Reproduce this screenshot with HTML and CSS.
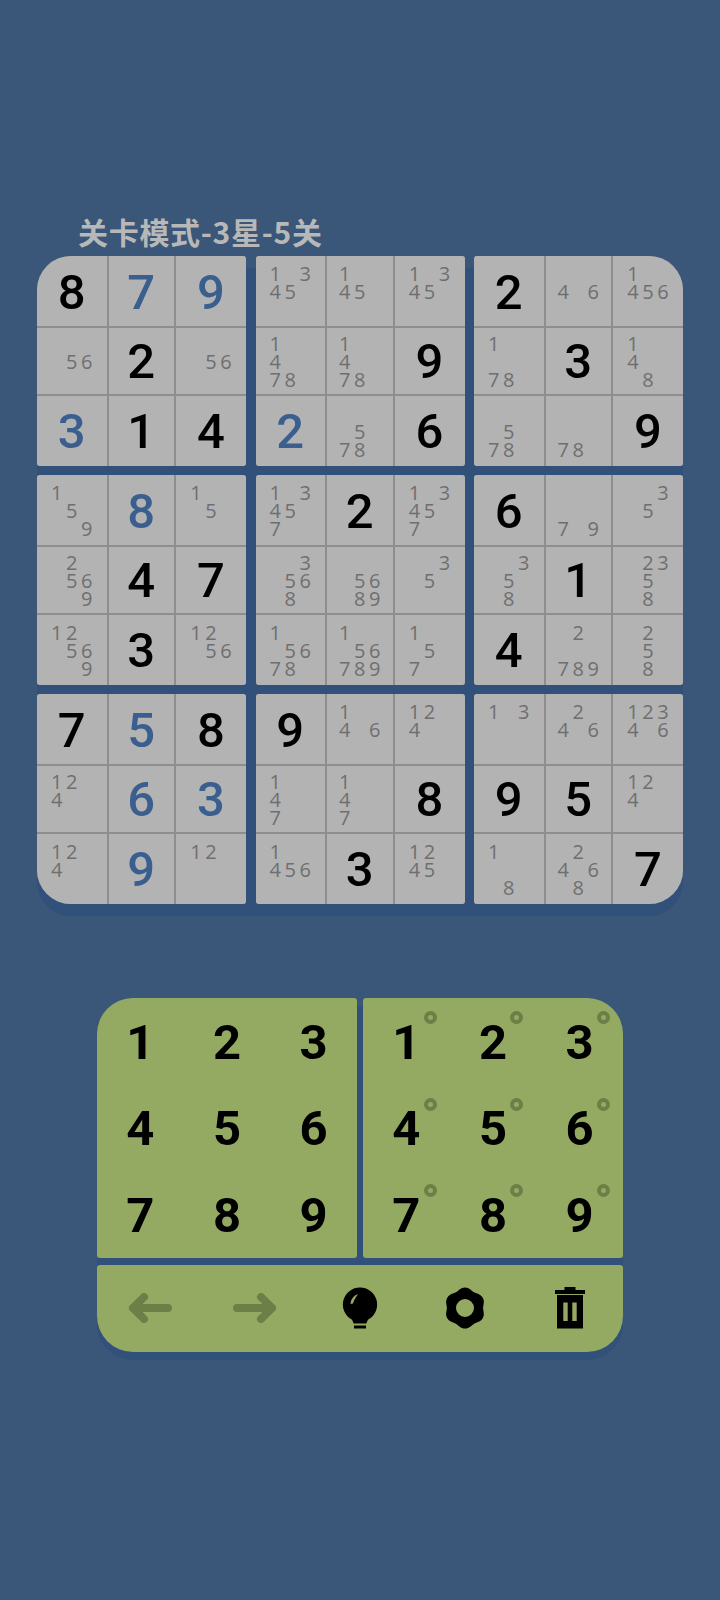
FILE: index.html
```html
<!DOCTYPE html>
<html lang="zh">
<head>
<meta charset="utf-8">
<title>数独</title>
<link rel="stylesheet" href="styles.css">
</head>
<body>
<main class="page">
<h1 class="title">关卡模式-3星-5关</h1>
<section class="board">
<div class="box tl">
<div class="cell">8</div><div class="cell given">7</div><div class="cell given">9</div>
<div class="cell"><div class="notes"><b class="n5">5</b><b class="n6">6</b></div></div><div class="cell">2</div><div class="cell"><div class="notes"><b class="n5">5</b><b class="n6">6</b></div></div>
<div class="cell given">3</div><div class="cell">1</div><div class="cell">4</div>
</div>
<div class="box">
<div class="cell"><div class="notes"><b class="n1">1</b><b class="n3">3</b><b class="n4">4</b><b class="n5">5</b></div></div><div class="cell"><div class="notes"><b class="n1">1</b><b class="n4">4</b><b class="n5">5</b></div></div><div class="cell"><div class="notes"><b class="n1">1</b><b class="n3">3</b><b class="n4">4</b><b class="n5">5</b></div></div>
<div class="cell"><div class="notes"><b class="n1">1</b><b class="n4">4</b><b class="n7">7</b><b class="n8">8</b></div></div><div class="cell"><div class="notes"><b class="n1">1</b><b class="n4">4</b><b class="n7">7</b><b class="n8">8</b></div></div><div class="cell">9</div>
<div class="cell given">2</div><div class="cell"><div class="notes"><b class="n5">5</b><b class="n7">7</b><b class="n8">8</b></div></div><div class="cell">6</div>
</div>
<div class="box tr">
<div class="cell">2</div><div class="cell"><div class="notes"><b class="n4">4</b><b class="n6">6</b></div></div><div class="cell"><div class="notes"><b class="n1">1</b><b class="n4">4</b><b class="n5">5</b><b class="n6">6</b></div></div>
<div class="cell"><div class="notes"><b class="n1">1</b><b class="n7">7</b><b class="n8">8</b></div></div><div class="cell">3</div><div class="cell"><div class="notes"><b class="n1">1</b><b class="n4">4</b><b class="n8">8</b></div></div>
<div class="cell"><div class="notes"><b class="n5">5</b><b class="n7">7</b><b class="n8">8</b></div></div><div class="cell"><div class="notes"><b class="n7">7</b><b class="n8">8</b></div></div><div class="cell">9</div>
</div>
<div class="box">
<div class="cell"><div class="notes"><b class="n1">1</b><b class="n5">5</b><b class="n9">9</b></div></div><div class="cell given">8</div><div class="cell"><div class="notes"><b class="n1">1</b><b class="n5">5</b></div></div>
<div class="cell"><div class="notes"><b class="n2">2</b><b class="n5">5</b><b class="n6">6</b><b class="n9">9</b></div></div><div class="cell">4</div><div class="cell">7</div>
<div class="cell"><div class="notes"><b class="n1">1</b><b class="n2">2</b><b class="n5">5</b><b class="n6">6</b><b class="n9">9</b></div></div><div class="cell">3</div><div class="cell"><div class="notes"><b class="n1">1</b><b class="n2">2</b><b class="n5">5</b><b class="n6">6</b></div></div>
</div>
<div class="box">
<div class="cell"><div class="notes"><b class="n1">1</b><b class="n3">3</b><b class="n4">4</b><b class="n5">5</b><b class="n7">7</b></div></div><div class="cell">2</div><div class="cell"><div class="notes"><b class="n1">1</b><b class="n3">3</b><b class="n4">4</b><b class="n5">5</b><b class="n7">7</b></div></div>
<div class="cell"><div class="notes"><b class="n3">3</b><b class="n5">5</b><b class="n6">6</b><b class="n8">8</b></div></div><div class="cell"><div class="notes"><b class="n5">5</b><b class="n6">6</b><b class="n8">8</b><b class="n9">9</b></div></div><div class="cell"><div class="notes"><b class="n3">3</b><b class="n5">5</b></div></div>
<div class="cell"><div class="notes"><b class="n1">1</b><b class="n5">5</b><b class="n6">6</b><b class="n7">7</b><b class="n8">8</b></div></div><div class="cell"><div class="notes"><b class="n1">1</b><b class="n5">5</b><b class="n6">6</b><b class="n7">7</b><b class="n8">8</b><b class="n9">9</b></div></div><div class="cell"><div class="notes"><b class="n1">1</b><b class="n5">5</b><b class="n7">7</b></div></div>
</div>
<div class="box">
<div class="cell">6</div><div class="cell"><div class="notes"><b class="n7">7</b><b class="n9">9</b></div></div><div class="cell"><div class="notes"><b class="n3">3</b><b class="n5">5</b></div></div>
<div class="cell"><div class="notes"><b class="n3">3</b><b class="n5">5</b><b class="n8">8</b></div></div><div class="cell">1</div><div class="cell"><div class="notes"><b class="n2">2</b><b class="n3">3</b><b class="n5">5</b><b class="n8">8</b></div></div>
<div class="cell">4</div><div class="cell"><div class="notes"><b class="n2">2</b><b class="n7">7</b><b class="n8">8</b><b class="n9">9</b></div></div><div class="cell"><div class="notes"><b class="n2">2</b><b class="n5">5</b><b class="n8">8</b></div></div>
</div>
<div class="box bl">
<div class="cell">7</div><div class="cell given">5</div><div class="cell">8</div>
<div class="cell"><div class="notes"><b class="n1">1</b><b class="n2">2</b><b class="n4">4</b></div></div><div class="cell given">6</div><div class="cell given">3</div>
<div class="cell"><div class="notes"><b class="n1">1</b><b class="n2">2</b><b class="n4">4</b></div></div><div class="cell given">9</div><div class="cell"><div class="notes"><b class="n1">1</b><b class="n2">2</b></div></div>
</div>
<div class="box">
<div class="cell">9</div><div class="cell"><div class="notes"><b class="n1">1</b><b class="n4">4</b><b class="n6">6</b></div></div><div class="cell"><div class="notes"><b class="n1">1</b><b class="n2">2</b><b class="n4">4</b></div></div>
<div class="cell"><div class="notes"><b class="n1">1</b><b class="n4">4</b><b class="n7">7</b></div></div><div class="cell"><div class="notes"><b class="n1">1</b><b class="n4">4</b><b class="n7">7</b></div></div><div class="cell">8</div>
<div class="cell"><div class="notes"><b class="n1">1</b><b class="n4">4</b><b class="n5">5</b><b class="n6">6</b></div></div><div class="cell">3</div><div class="cell"><div class="notes"><b class="n1">1</b><b class="n2">2</b><b class="n4">4</b><b class="n5">5</b></div></div>
</div>
<div class="box br">
<div class="cell"><div class="notes"><b class="n1">1</b><b class="n3">3</b></div></div><div class="cell"><div class="notes"><b class="n2">2</b><b class="n4">4</b><b class="n6">6</b></div></div><div class="cell"><div class="notes"><b class="n1">1</b><b class="n2">2</b><b class="n3">3</b><b class="n4">4</b><b class="n6">6</b></div></div>
<div class="cell">9</div><div class="cell">5</div><div class="cell"><div class="notes"><b class="n1">1</b><b class="n2">2</b><b class="n4">4</b></div></div>
<div class="cell"><div class="notes"><b class="n1">1</b><b class="n8">8</b></div></div><div class="cell"><div class="notes"><b class="n2">2</b><b class="n4">4</b><b class="n6">6</b><b class="n8">8</b></div></div><div class="cell">7</div>
</div>
</section>
<section class="pad">
<div class="keys">
<div class="keyset left">
<span class="key">1</span><span class="key">2</span><span class="key">3</span>
<span class="key">4</span><span class="key">5</span><span class="key">6</span>
<span class="key">7</span><span class="key">8</span><span class="key">9</span>
</div>
<div class="keyset right">
<span class="key mark">1</span><span class="key mark">2</span><span class="key mark">3</span>
<span class="key mark">4</span><span class="key mark">5</span><span class="key mark">6</span>
<span class="key mark">7</span><span class="key mark">8</span><span class="key mark">9</span>
</div>
</div>
<div class="tools">
<span class="tool"><svg width="44" height="30" viewBox="0 0 44 30"><path class="dim" d="M40 15H5M16 4 5 15l11 11"/></svg></span>
<span class="tool"><svg width="44" height="30" viewBox="0 0 44 30"><path class="dim" d="M4 15h35M28 4l11 11-11 11"/></svg></span>
<span class="tool"><svg width="36" height="42" viewBox="0 0 36 42"><path class="solid" d="M18 .5A17 17 0 0 1 27 32c-1.500 1-2 2.500-2.500 4.500h-13c-.5-2-1-3.500-2.500-4.500A17 17 0 0 1 18 .5Z"/><rect class="solid" x="12" y="38.500" width="12" height="3"/><path class="glint" d="M8.500 17c.3-4.500 3-8.500 7.500-10-1.500 2.500-4 5.500-5 9.500Z"/></svg></span>
<span class="tool"><svg width="40" height="42" viewBox="0 0 40 42"><path class="solid" fill-rule="evenodd" d="M20 .5C24.500 .5 26.450 3.820 29.050 5.320C31.650 6.820 35.500 6.850 37.750 10.750C40 14.650 38.100 18 38.100 21C38.100 24 40 27.350 37.750 31.250C35.500 35.150 31.650 35.180 29.050 36.680C26.450 38.180 24.500 41.500 20 41.500C15.500 41.500 13.550 38.180 10.950 36.680C8.350 35.180 4.500 35.150 2.250 31.250C0 27.350 1.900 24 1.900 21C1.900 18 0 14.650 2.250 10.750C4.500 6.850 8.350 6.820 10.950 5.320C13.550 3.820 15.500 .5 20 .5ZM20 12a9 9 0 1 0 0 18 9 9 0 0 0 0-18Z"/></svg></span>
<span class="tool"><svg width="30" height="42" viewBox="0 0 30 42"><path class="solid" fill-rule="evenodd" d="M9.500 0h11v3H30v4H0V3h9.500ZM2 8h26v33.500H2ZM8.300 15.500v18.500h4.400V15.500Zm9 0v18.500h4.400V15.500Z"/></svg></span>
</div>
</section>
</main>
</body>
</html>
```
FILE: styles.css
```css
* { box-sizing: border-box; }
html, body { margin: 0; background: #3a5679; }
body { font-family: "Roboto", "Noto Sans CJK SC", sans-serif; }
.page { width: 720px; height: 1600px; padding-top: 213px; display: flex; flex-direction: column; }
.title {
  margin: 0 0 0 78px; height: 43px;
  font: 700 30px/36px "Noto Sans CJK SC", sans-serif;
  letter-spacing: .7px;
  color: #b8b8b8; white-space: nowrap;
}
.board {
  position: relative; margin-left: 37px; width: 646px;
  display: grid; grid-template-columns: repeat(3, 209px); grid-auto-rows: 209.500px; gap: 9.500px;
}
.board::before {
  content: ""; position: absolute; left: 0; right: 0; top: 12px; bottom: -12px;
  background: #31507a; border-radius: 34px;
}
.box {
  position: relative; display: grid;
  grid-template-columns: 69.500px 65.500px 70px; grid-template-rows: 70px 65.500px 70px; gap: 2px;
  background: #8e8e8e; border-radius: 3px; overflow: hidden;
}
.box.tl { border-top-left-radius: 34px; }
.box.tr { border-top-right-radius: 34px; }
.box.bl { border-bottom-left-radius: 34px; }
.box.br { border-bottom-right-radius: 34px; }
.cell {
  background: #b3b3b3; display: flex; align-items: center; justify-content: center;
  padding-top: 2px;
  font-size: 49px; font-weight: 500; color: #000; line-height: 1;
}
.cell.given { color: #3a5f8f; }
.notes {
  display: grid; grid-template-columns: repeat(3, 15px); grid-template-rows: repeat(3, 18px);
  font-family: "Open Sans", sans-serif; font-size: 20px; font-weight: 500; color: #6f6f6f; line-height: 18px; text-align: center;
}
.notes b { font-weight: 500; }
.n1 { grid-area: 1 / 1; } .n2 { grid-area: 1 / 2; } .n3 { grid-area: 1 / 3; }
.n4 { grid-area: 2 / 1; } .n5 { grid-area: 2 / 2; } .n6 { grid-area: 2 / 3; }
.n7 { grid-area: 3 / 1; } .n8 { grid-area: 3 / 2; } .n9 { grid-area: 3 / 3; }
.pad {
  position: relative; margin: 94px 0 0 97px; width: 526px;
  display: flex; flex-direction: column; gap: 7px;
}
.pad::before {
  content: ""; position: absolute; left: 0; right: 0; top: 8px; bottom: -8px;
  background: #31507a; border-radius: 36px;
}
.keys { position: relative; display: flex; gap: 6px; }
.keyset {
  width: 260px; height: 260px; background: #94aa63; border-radius: 3px;
  display: grid; grid-template-columns: repeat(3, 1fr); grid-template-rows: repeat(3, 1fr);
}
.keyset.left { border-top-left-radius: 36px; }
.keyset.right { border-top-right-radius: 36px; }
.key {
  position: relative; display: flex; align-items: center; justify-content: center;
  padding-top: 3px;
  font-size: 49px; font-weight: 700; color: #000; line-height: 1;
}
.key.mark::after {
  content: ""; position: absolute; left: 60.500px; top: 13.500px; width: 13px; height: 13px;
  box-sizing: border-box; border: 4px solid #6b7f46; border-radius: 50%;
}
.tools {
  position: relative; height: 87px; background: #94aa63;
  border-radius: 3px 3px 36px 36px;
  display: grid; grid-template-columns: repeat(5, 1fr); align-items: center; justify-items: center;
}
.tool { display: flex; }
.dim { fill: none; stroke: #6b7f46; stroke-width: 8; stroke-linecap: round; stroke-linejoin: round; }
.solid { fill: #000; }
.glint { fill: #94aa63; }
```
